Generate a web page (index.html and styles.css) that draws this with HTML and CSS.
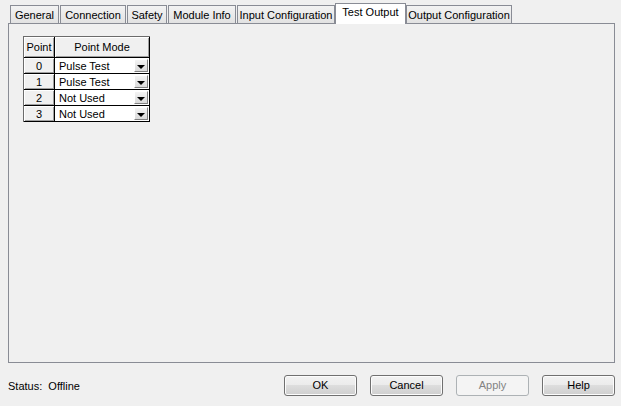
FILE: index.html
```html
<!DOCTYPE html>
<html>
<head>
<meta charset="utf-8">
<link rel="stylesheet" href="styles.css">
</head>
<body>
<div class="dialog">
  <div class="tabs">
    <div class="tab tab-general">General</div>
    <div class="tab tab-connection">Connection</div>
    <div class="tab tab-safety">Safety</div>
    <div class="tab tab-module">Module Info</div>
    <div class="tab tab-input">Input Configuration</div>
    <div class="tab tab-active">Test Output</div>
    <div class="tab tab-output">Output Configuration</div>
  </div>
  <div class="panel">
    <div class="grid">
      <div class="hcell">Point</div>
      <div class="hcell">Point Mode</div>

      <div class="rcell">0</div>
      <div class="vcell"><span class="vtext">Pulse Test</span><span class="drop"><span class="arrow"></span></span></div>

      <div class="rcell">1</div>
      <div class="vcell"><span class="vtext">Pulse Test</span><span class="drop"><span class="arrow"></span></span></div>

      <div class="rcell">2</div>
      <div class="vcell"><span class="vtext">Not Used</span><span class="drop"><span class="arrow"></span></span></div>

      <div class="rcell">3</div>
      <div class="vcell"><span class="vtext">Not Used</span><span class="drop"><span class="arrow"></span></span></div>
    </div>
  </div>
  <div class="footer">
    <div class="status">Status:&nbsp; Offline</div>
    <div class="buttons">
      <div class="btn">OK</div>
      <div class="btn">Cancel</div>
      <div class="btn btn-disabled">Apply</div>
      <div class="btn">Help</div>
    </div>
  </div>
</div>
</body>
</html>
```

FILE: styles.css
```css
html, body {
  margin: 0;
  padding: 0;
  background: #f0f0f0;
}

body {
  width: 621px;
  height: 406px;
  overflow: hidden;
  font-family: "Liberation Sans", Arial, sans-serif;
  font-size: 11px;
  color: #000;
}

.dialog {
  display: flex;
  flex-direction: column;
  padding-top: 3px;
}

.tabs {
  display: flex;
  align-items: flex-end;
  height: 20px;
  padding-left: 10px;
  gap: 1px;
}

.tab {
  height: 17px;
  line-height: 18px;
  padding: 0;
  text-align: center;
  border: 1px solid #898c95;
  border-bottom: none;
  background: linear-gradient(#f3f3f3, #e2e2e2);
  white-space: nowrap;
  box-sizing: content-box;
}

.tab-general { width: 47px; }
.tab-connection { width: 64px; }
.tab-safety { width: 38px; }
.tab-module { width: 66px; }
.tab-input { width: 96px; }
.tab-output { width: 104px; }

.tab-active {
  position: relative;
  z-index: 1;
  width: 69px;
  height: 20px;
  line-height: 17px;
  margin: 0 -1px -1px -1px;
  background: #ffffff;
}

.panel {
  height: 340px;
  margin: 0 6px 0 8px;
  border: 1px solid #898c95;
  background: #f0f0f0;
  padding: 12px 0 0 14px;
  box-sizing: border-box;
}

.grid {
  display: grid;
  grid-template-columns: 31px 95px;
  grid-template-rows: 21px repeat(4, 16px);
  width: 126px;
  border-left: 1px solid #6b6b6b;
  border-top: 1px solid #6b6b6b;
}

.hcell, .rcell {
  display: flex;
  align-items: center;
  justify-content: center;
  background: #f0f0f0;
  border-right: 1px solid #000;
  border-bottom: 1px solid #000;
  box-shadow: inset 1px 1px 0 #ffffff, inset -1px -1px 0 #a0a0a0;
}

.rcell {
  padding-top: 1px;
  box-sizing: border-box;
}

.vcell {
  display: flex;
  align-items: center;
  background: #ffffff;
  border-right: 1px solid #000;
  border-bottom: 1px solid #000;
  padding-left: 4px;
}

.vtext {
  flex: 1;
}

.drop {
  display: flex;
  align-items: flex-end;
  justify-content: center;
  width: 14px;
  height: 13px;
  margin-right: 1px;
  box-sizing: border-box;
  padding-bottom: 2px;
  background: linear-gradient(#f4f4f4, #d9d9d9);
  border-top: 1px solid #ffffff;
  border-left: 1px solid #ffffff;
  border-right: 1px solid #808080;
  border-bottom: 1px solid #808080;
}

.arrow {
  width: 0;
  height: 0;
  border-left: 4px solid transparent;
  border-right: 4px solid transparent;
  border-top: 4px solid #000;
}

.footer {
  display: flex;
  align-items: center;
  justify-content: space-between;
  margin-top: 12px;
  padding: 0 6px 0 8px;
}

.buttons {
  display: flex;
  gap: 13px;
}

.btn {
  width: 71px;
  height: 19px;
  line-height: 19px;
  text-align: center;
  border: 1px solid #707070;
  border-radius: 3px;
  background: linear-gradient(#f2f2f2 0%, #ebebeb 50%, #dddddd 50%, #cfcfcf 100%);
  box-shadow: inset 0 0 0 1px #fcfcfc;
}

.btn-disabled {
  border-color: #adb2b5;
  background: #f4f4f4;
  color: #838383;
  box-shadow: none;
}
```
